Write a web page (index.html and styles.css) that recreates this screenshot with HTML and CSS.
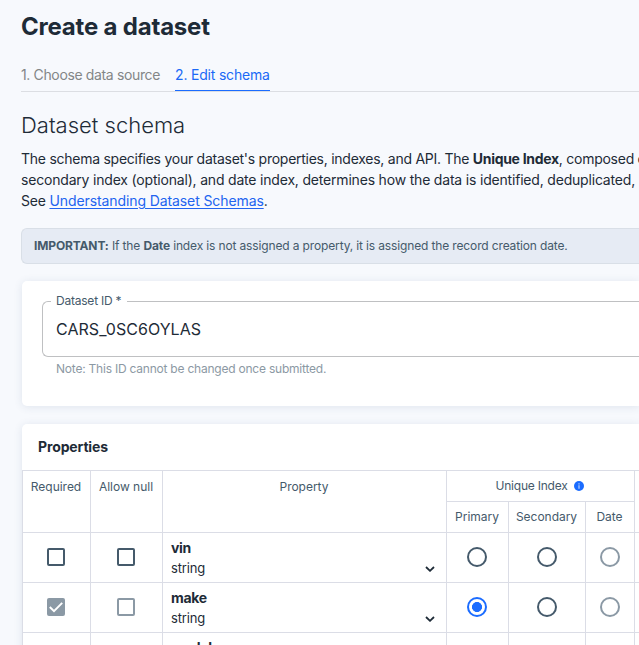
FILE: index.html
```
<!DOCTYPE html>
<html lang="en">
<head>
<meta charset="utf-8">
<title>Create a dataset</title>
<link rel="stylesheet" href="styles.css">
</head>
<body>
<main class="page">
  <h1 class="title">Create a dataset</h1>
  <nav class="tabs">
    <a class="tab tab-first">1. Choose data source</a>
    <a class="tab tab-active">2. Edit schema</a>
  </nav>
  <h2 class="subtitle">Dataset schema</h2>
  <p class="intro"><span class="line-one">The schema specifies your dataset's properties, indexes, and API. The <b>Unique Index</b>, composed of</span><br>secondary index (optional), and date index, determines how the data is identified, deduplicated,<br>See <a class="link">Understanding Dataset Schemas</a>.</p>
  <div class="alert"><b>IMPORTANT:</b> If the <b>Date</b> index is not assigned a property, it is assigned the record creation date.</div>

  <section class="card id-card">
    <fieldset class="field">
      <legend>Dataset ID *</legend>
      <div class="value">CARS_0SC6OYLAS</div>
    </fieldset>
    <p class="note">Note: This ID cannot be changed once submitted.</p>
  </section>

  <section class="card props-card">
    <h3 class="card-title">Properties</h3>
    <table class="grid">
      <colgroup><col class="c-req"><col class="c-null"><col class="c-prop"><col class="c-pri"><col class="c-sec"><col class="c-date"><col></colgroup>
      <thead>
        <tr>
          <th rowspan="2">Required</th>
          <th rowspan="2">Allow null</th>
          <th rowspan="2">Property</th>
          <th colspan="3" class="unique">Unique Index<svg class="info" viewBox="0 0 10 10"><circle cx="5" cy="5" r="5" fill="#1b6cff"/><path d="M5 2.2v1.2M5 4.2v3.6" stroke="#b9d2ff" stroke-width="1.2"/></svg></th>
          <th rowspan="2"></th>
        </tr>
        <tr><th>Primary</th><th>Secondary</th><th>Date</th></tr>
      </thead>
      <tbody>
        <tr>
          <td class="pick"><span class="check"></span></td>
          <td class="pick"><span class="check"></span></td>
          <td class="prop"><div class="name">vin</div><div class="type">string<svg class="chev" viewBox="0 0 10 6"><path d="M1 1l4 3.8L9 1"/></svg></div></td>
          <td class="pick"><span class="radio"></span></td>
          <td class="pick-mid"><span class="radio"></span></td>
          <td class="pick-mid"><span class="radio muted"></span></td>
          <td></td>
        </tr>
        <tr>
          <td class="pick"><span class="check muted checked"><svg viewBox="0 0 18 18"><path d="M2.8 9l4.2 4.1L15.2 4.9"/></svg></span></td>
          <td class="pick"><span class="check muted"></span></td>
          <td class="prop"><div class="name">make</div><div class="type">string<svg class="chev" viewBox="0 0 10 6"><path d="M1 1l4 3.8L9 1"/></svg></div></td>
          <td class="pick"><span class="radio selected"></span></td>
          <td class="pick-mid"><span class="radio"></span></td>
          <td class="pick-mid"><span class="radio muted"></span></td>
          <td></td>
        </tr>
        <tr>
          <td></td>
          <td></td>
          <td class="prop"><div class="name">model</div><div class="type">string</div></td>
          <td></td><td></td><td></td><td></td>
        </tr>
      </tbody>
    </table>
  </section>
</main>
</body>
</html>
```
FILE: styles.css
```
* { box-sizing: border-box; }
body {
  margin: 0;
  background: #f7f9fd;
  color: #1e2b37;
  font: 14px/21px Inter, "Liberation Sans", sans-serif;
  letter-spacing: -0.19px;
}
.page { height: 645px; padding: 11px 0 0 21px; overflow: hidden; }
h1, h2, h3, p { margin: 0; }
b { font-weight: 700; }

.title { font-size: 24px; line-height: 32px; font-weight: 700; letter-spacing: -0.2px; }
.tabs { display: flex; gap: 15px; height: 30px; margin-top: 19px; border-bottom: 1px solid #dcdee3; }
.tab { height: 30px; line-height: 26px; color: #838687; }
.tab-first { letter-spacing: -0.36px; }
.tab-active { width: 95px; color: #1b69f6; border-bottom: 1px solid #1b6cff; height: 29px; }
.subtitle { margin-top: 18px; font-size: 22px; line-height: 30px; font-weight: 300; letter-spacing: 0; }
.intro { margin-top: 8px; white-space: nowrap; }
.line-one { letter-spacing: -0.26px; }
.intro b { letter-spacing: -0.3px; }
.link { color: #2264f0; text-decoration: underline; text-underline-offset: 2px; letter-spacing: -0.1px; }
.alert {
  height: 36px;
  margin-top: 17px;
  padding-left: 12px;
  border: 1px solid #d9dfe7;
  border-right: 0;
  border-radius: 6px 0 0 6px;
  background: #e6ebf4;
  color: #455a6b;
  font-size: 12px;
  line-height: 34px;
  letter-spacing: -0.14px;
}

.card { margin: 17px 0 0 1px; border-radius: 5px 0 0 5px; background: #fff; box-shadow: 0 1px 8px rgba(50, 80, 120, .12); }
.id-card { height: 125px; padding: 13px 0 0 20px; }
.props-card { margin-top: 18px; }
.field {
  height: 63px;
  margin: 0;
  padding: 0 0 0 13px;
  border: 1px solid #bfc0c2;
  border-right: 0;
  border-radius: 6px 0 0 6px;
}
.field legend { margin-left: -5px; padding: 0 6px 0 5px; color: #455a6b; font-size: 12px; line-height: 14px; letter-spacing: -0.22px; }
.value { font-size: 16px; line-height: 24px; margin-top: 9px; letter-spacing: 0.05px; }
.note { margin: 3px 0 0 14px; color: #8c99a4; font-size: 12px; line-height: 18px; letter-spacing: -0.22px; }

.card-title { height: 46px; padding-left: 16px; font-size: 14px; line-height: 46px; font-weight: 700; letter-spacing: -0.13px; }
.grid { width: 100%; table-layout: fixed; border-spacing: 0; }
.c-req { width: 68px; }
.c-null { width: 72px; }
.c-prop { width: 284px; }
.c-pri { width: 62px; }
.c-sec { width: 77px; }
.c-date { width: 49px; }
th, td { padding: 0; border: 0 solid #dbdde6; border-width: 1px 0 0 1px; text-align: center; }
th { height: 31px; padding-right: 1px; color: #455a6b; font-size: 12px; font-weight: 400; line-height: 30px; letter-spacing: -0.02px; vertical-align: top; white-space: nowrap; }
th[rowspan] { line-height: 32px; }
.unique { padding-right: 2px; letter-spacing: -0.22px; }
.info { width: 10px; height: 10px; margin-left: 6px; vertical-align: -1px; }
td { height: 50px; line-height: 0; vertical-align: middle; }
.pick { padding: 0 2px 1px 0; }
.pick-mid { padding-bottom: 1px; }
.prop { padding: 4px 11px 0 8px; text-align: left; vertical-align: top; }
.name { font-size: 14px; line-height: 22px; font-weight: 700; letter-spacing: -0.3px; }
.type { display: flex; align-items: center; justify-content: space-between; font-size: 13px; line-height: 19px; letter-spacing: -0.15px; }
.chev { width: 10px; height: 6px; }
.chev path { fill: none; stroke: #1e2b37; stroke-width: 1.8; }

.check { display: inline-block; width: 18px; height: 18px; border: 2px solid #455a6b; border-radius: 2px; vertical-align: top; }
.check.muted { border-color: #8b99a5; }
.checked { background: #8b99a5; }
.checked svg { display: block; width: 18px; height: 18px; margin: -2px; }
.checked path { fill: none; stroke: #fff; stroke-width: 2; }
.radio { display: inline-block; width: 20px; height: 20px; border: 2px solid #455a6b; border-radius: 50%; vertical-align: top; }
.radio.muted { border-color: #8b99a5; }
.radio.selected { border-color: #1b6cff; background: radial-gradient(circle, #1b6cff 4.7px, #fff 5.3px); }
```
